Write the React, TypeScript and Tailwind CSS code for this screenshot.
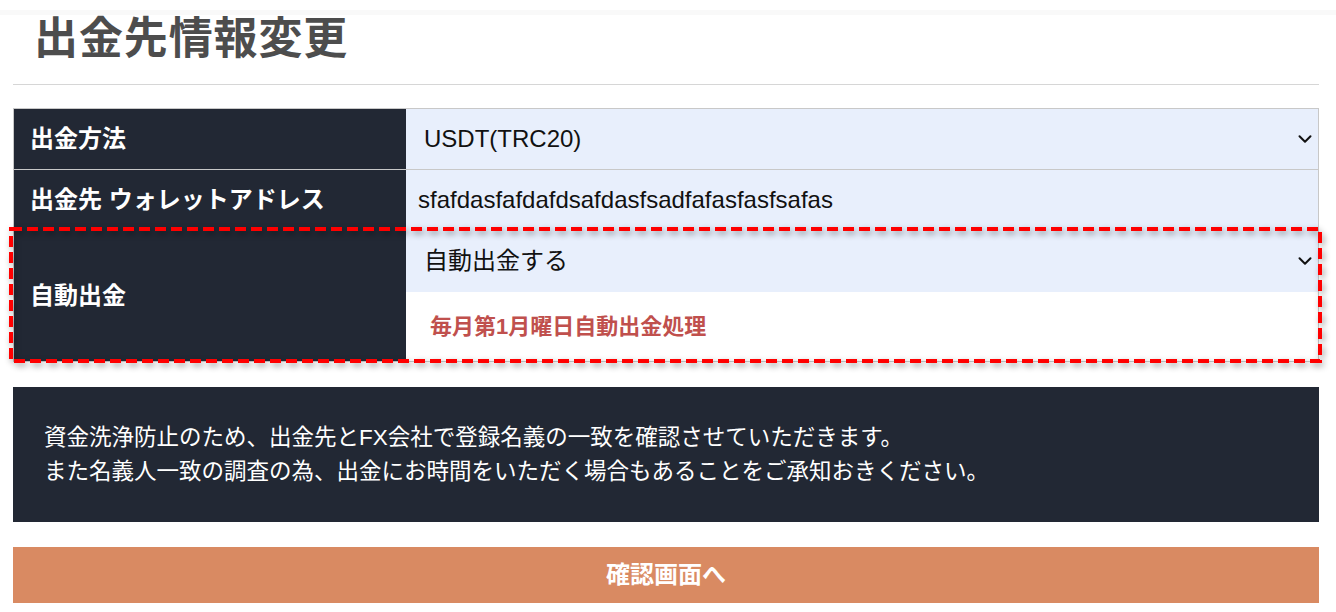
import { ChevronDown } from "lucide-react";

const jp = "font-['Liberation_Sans','Noto_Sans_CJK_JP',sans-serif]";

function SelectCell({ value }: { value: string }) {
  return (
    <div className="flex h-full items-center justify-between bg-[#e8effc] pl-[18px] pr-[2px]">
      <span className="text-[24px] text-[#111]">{value}</span>
      <ChevronDown size={22} strokeWidth={2.2} className="text-[#111]" />
    </div>
  );
}

export default function App() {
  return (
    <div className={`${jp} min-h-[612px] bg-white`}>
      <div className="h-[10px]" />
      <div className="h-[5px] bg-[#f9f9f9]" />
      <div className="ml-[13px] w-[1306px]">
        <div className="flex h-[48px] items-center pl-[21px]">
          <h1 className="text-[44px] font-bold tracking-[0.02em] text-[#4d4d4d]">出金先情報変更</h1>
        </div>
        <div className="mt-[21px] border-t border-[#d6d6d6]" />

        <div className="mt-[23px] border-x border-t border-[#c8c8c8]">
          <div className="flex h-[61px] border-b border-[#c8c8c8]">
            <div className="flex w-[392px] items-center bg-[#222834] pl-[16px] text-[24px] font-bold text-white">
              出金方法
            </div>
            <div className="flex-1">
              <SelectCell value="USDT(TRC20)" />
            </div>
          </div>
          <div className="flex h-[60px]">
            <div className="flex w-[392px] items-center bg-[#222834] pl-[16px] text-[24px] font-bold text-white">
              出金先 ウォレットアドレス
            </div>
            <div className="flex flex-1 items-center bg-[#e8effc] pl-[12px] text-[24px] text-[#111]">
              sfafdasfafdafdsafdasfsadfafasfasfsafas
            </div>
          </div>
          <div className="relative flex h-[132px] border-b border-[#c8c8c8]">
            <div className="flex w-[392px] items-center bg-[#222834] pl-[16px] text-[24px] font-bold text-white">
              自動出金
            </div>
            <div className="flex flex-1 flex-col">
              <div className="h-[62px]">
                <SelectCell value="自動出金する" />
              </div>
              <div className="flex flex-1 items-center bg-white pl-[24px] text-[22px] font-bold text-[#c0504d]">
                毎月第1月曜日自動出金処理
              </div>
            </div>
            {/* highlight annotation */}
            <svg
              className="pointer-events-none absolute -left-[3px] -right-[2px] -top-[1px] bottom-0 h-[calc(100%+1px)] w-[calc(100%+5px)] overflow-visible drop-shadow-[2px_3px_3px_rgba(0,0,0,0.4)]"
            >
              <rect width="100%" height="100%" fill="none" stroke="#ff0000" strokeWidth="4" strokeDasharray="11 5" />
            </svg>
          </div>
        </div>

        <div className="mt-[25px] flex h-[135px] flex-col justify-center bg-[#222834] pl-[31px] text-[22.5px] leading-[34px] text-white">
          <p>資金洗浄防止のため、出金先とFX会社で登録名義の一致を確認させていただきます。</p>
          <p>また名義人一致の調査の為、出金にお時間をいただく場合もあることをご承知おきください。</p>
        </div>

        <button className="mt-[25px] flex h-[56px] w-full items-center justify-center bg-[#d98a62] text-[24px] font-bold text-white">
          確認画面へ
        </button>
      </div>
    </div>
  );
}
